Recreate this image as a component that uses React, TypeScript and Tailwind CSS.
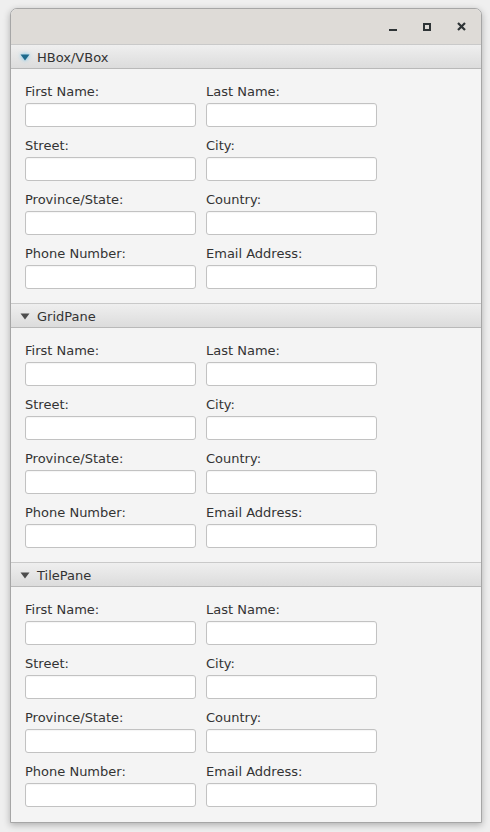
import React from "react";

const rows: [string, string][] = [
  ["First Name:", "Last Name:"],
  ["Street:", "City:"],
  ["Province/State:", "Country:"],
  ["Phone Number:", "Email Address:"],
];

function Field({ label }: { label: string }) {
  return (
    <div className="flex w-[171px] flex-col gap-[4px]">
      <div className="h-[16px] whitespace-nowrap text-[13px] leading-[18px] text-[#333333]">{label}</div>
      <div className="h-[24px] w-[171px] rounded-[3px] border border-[#c2c2c2] bg-white shadow-[inset_0_1px_1px_rgba(0,0,0,0.04)]" />
    </div>
  );
}

function Triangle({ active }: { active: boolean }) {
  return (
    <svg
      width="12"
      height="10"
      viewBox="0 0 12 10"
      className={active ? "drop-shadow-[0_0_2px_rgba(80,190,240,0.95)]" : ""}
    >
      <polygon points="1.5,2.5 10.5,2.5 6,8.5" fill={active ? "#1d6a8c" : "#4d4d4d"} />
    </svg>
  );
}

function Section({ title, active }: { title: string; active?: boolean }) {
  return (
    <div className="flex flex-col">
      <div className="flex h-[25px] items-center gap-[6px] border-y border-t-[#c9c9c9] border-b-[#b9b9b9] bg-gradient-to-b from-[#efefef] to-[#dcdcdc] pl-[8px]">
        <Triangle active={!!active} />
        <span className="text-[13px] leading-[18px] pt-[2px] text-[#333333]">{title}</span>
      </div>
      <div className="flex h-[234px] flex-col gap-[10px] bg-[#f4f4f4] pl-[14px] pt-[14px]">
        {rows.map(([a, b]) => (
          <div key={a} className="flex gap-[10px]">
            <Field label={a} />
            <Field label={b} />
          </div>
        ))}
      </div>
    </div>
  );
}

export default function App() {
  return (
    <div
      className="h-[832px] w-[490px] bg-[#efefef] pl-[10px] pt-[8px]"
      style={{ fontFamily: '"DejaVu Sans", sans-serif' }}
    >
      <div className="flex h-[815px] w-[472px] flex-col overflow-hidden rounded-t-[7px] border border-[#a6a6a6] bg-[#f4f4f4] shadow-[0_2px_7px_rgba(0,0,0,0.28)]">
        <div className="flex h-[35px] shrink-0 items-center justify-end bg-[#dedbd7] pr-[15px]">
          <div className="flex items-center gap-[26px]">
            <div className="mt-[6px] h-[2px] w-[8px] bg-[#2e3436]" />
            <div className="h-[8px] w-[8px] border-2 border-[#2e3436]" />
            <svg width="9" height="9" viewBox="0 0 9 9">
              <path d="M1 1 L8 8 M8 1 L1 8" stroke="#2e3436" strokeWidth="2.2" />
            </svg>
          </div>
        </div>
        <Section title="HBox/VBox" active />
        <Section title="GridPane" />
        <Section title="TilePane" />
      </div>
    </div>
  );
}
